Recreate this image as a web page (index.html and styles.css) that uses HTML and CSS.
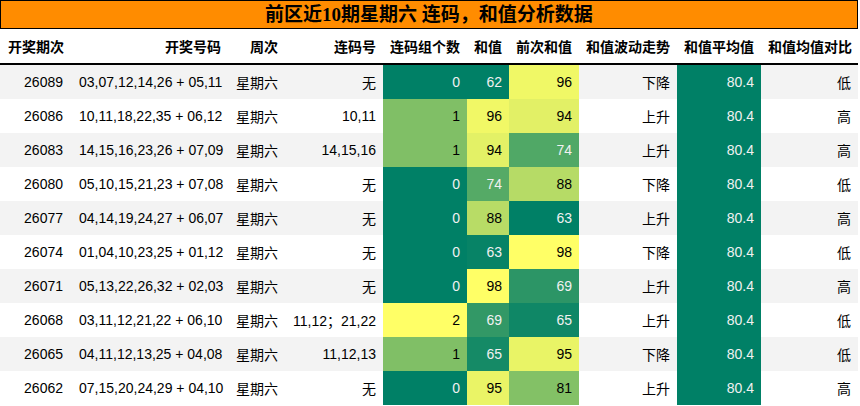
FILE: index.html
```html
<!DOCTYPE html>
<html lang="zh">
<head>
<meta charset="utf-8">
<link rel="stylesheet" href="styles.css">
</head>
<body>
<div class="title">前区近10期星期六 连码，和值分析数据</div>
<table class="grid">
  <colgroup>
    <col class="c1"><col class="c2"><col class="c3"><col class="c4"><col class="c5">
    <col class="c6"><col class="c7"><col class="c8"><col class="c9"><col class="c10">
  </colgroup>
  <thead>
    <tr>
      <th class="left">开奖期次</th><th>开奖号码</th><th>周次</th><th>连码号</th><th>连码组个数</th>
      <th>和值</th><th>前次和值</th><th>和值波动走势</th><th>和值平均值</th><th>和值均值对比</th>
    </tr>
  </thead>
  <tbody>
    <tr class="odd">
      <td>26089</td><td>03,07,12,14,26 + 05,11</td><td>星期六</td><td>无</td>
      <td class="lt" style="background:#008066">0</td>
      <td class="lt" style="background:#008066">62</td>
      <td style="background:#f0f866">96</td>
      <td>下降</td><td class="lt avg">80.4</td><td>低</td>
    </tr>
    <tr>
      <td>26086</td><td>10,11,18,22,35 + 06,12</td><td>星期六</td><td>10,11</td>
      <td style="background:#80bf66">1</td>
      <td style="background:#f1f866">96</td>
      <td style="background:#e2f066">94</td>
      <td>上升</td><td class="lt avg">80.4</td><td>高</td>
    </tr>
    <tr class="odd">
      <td>26083</td><td>14,15,16,23,26 + 07,09</td><td>星期六</td><td>14,15,16</td>
      <td style="background:#80bf66">1</td>
      <td style="background:#e3f166">94</td>
      <td class="lt" style="background:#50a866">74</td>
      <td>上升</td><td class="lt avg">80.4</td><td>高</td>
    </tr>
    <tr>
      <td>26080</td><td>05,10,15,21,23 + 07,08</td><td>星期六</td><td>无</td>
      <td class="lt" style="background:#008066">0</td>
      <td class="lt" style="background:#55aa66">74</td>
      <td style="background:#b6db66">88</td>
      <td>下降</td><td class="lt avg">80.4</td><td>低</td>
    </tr>
    <tr class="odd">
      <td>26077</td><td>04,14,19,24,27 + 06,07</td><td>星期六</td><td>无</td>
      <td class="lt" style="background:#008066">0</td>
      <td style="background:#b8dc66">88</td>
      <td class="lt" style="background:#008066">63</td>
      <td>上升</td><td class="lt avg">80.4</td><td>高</td>
    </tr>
    <tr>
      <td>26074</td><td>01,04,10,23,25 + 01,12</td><td>星期六</td><td>无</td>
      <td class="lt" style="background:#008066">0</td>
      <td class="lt" style="background:#078366">63</td>
      <td style="background:#ffff66">98</td>
      <td>下降</td><td class="lt avg">80.4</td><td>低</td>
    </tr>
    <tr class="odd">
      <td>26071</td><td>05,13,22,26,32 + 02,03</td><td>星期六</td><td>无</td>
      <td class="lt" style="background:#008066">0</td>
      <td style="background:#ffff66">98</td>
      <td class="lt" style="background:#2c9566">69</td>
      <td>上升</td><td class="lt avg">80.4</td><td>高</td>
    </tr>
    <tr>
      <td>26068</td><td>03,11,12,21,22 + 06,10</td><td>星期六</td><td>11,12；21,22</td>
      <td style="background:#ffff66">2</td>
      <td class="lt" style="background:#329866">69</td>
      <td class="lt" style="background:#0f8766">65</td>
      <td>上升</td><td class="lt avg">80.4</td><td>低</td>
    </tr>
    <tr class="odd">
      <td>26065</td><td>04,11,12,13,25 + 04,08</td><td>星期六</td><td>11,12,13</td>
      <td style="background:#80bf66">1</td>
      <td class="lt" style="background:#158a66">65</td>
      <td style="background:#e9f466">95</td>
      <td>下降</td><td class="lt avg">80.4</td><td>低</td>
    </tr>
    <tr>
      <td>26062</td><td>07,15,20,24,29 + 04,10</td><td>星期六</td><td>无</td>
      <td class="lt" style="background:#008066">0</td>
      <td style="background:#eaf466">95</td>
      <td style="background:#83c166">81</td>
      <td>上升</td><td class="lt avg">80.4</td><td>高</td>
    </tr>
  </tbody>
</table>
</body>
</html>
```

FILE: styles.css
```css
html, body {
  margin: 0;
  padding: 0;
  background: #ffffff;
}

body {
  width: 858px;
}

.title {
  box-sizing: border-box;
  height: 29px;
  background: #ff8c00;
  border: 1px solid #000000;
  color: #000000;
  font-family: "Liberation Serif", "Noto Sans CJK SC", serif;
  font-weight: bold;
  font-size: 19px;
  line-height: 27px;
  text-align: center;
}

.grid {
  width: 858px;
  border-collapse: collapse;
  table-layout: fixed;
  font-family: "Liberation Sans", "Noto Sans CJK SC", sans-serif;
  font-size: 14px;
  color: #000000;
}

.c1 { width: 72px; }
.c2 { width: 156px; }
.c3 { width: 57px; }
.c4 { width: 98px; }
.c5 { width: 84px; }
.c6 { width: 42px; }
.c7 { width: 70px; }
.c8 { width: 98px; }
.c9 { width: 84px; }
.c10 { width: 97px; }

.grid th {
  height: 34px;
  padding: 0 7px;
  font-family: "Noto Sans CJK SC", sans-serif;
  font-weight: bold;
  font-size: 14px;
  text-align: right;
  white-space: nowrap;
  border-bottom: 2px solid #000000;
  background: #ffffff;
}

.grid th.left {
  text-align: left;
  padding-left: 8px;
}

.grid td {
  height: 34px;
  padding: 0 7px;
  text-align: right;
  white-space: nowrap;
  background: #ffffff;
}

.grid td:first-child {
  padding-right: 9px;
}

.grid tr.odd td {
  background: #f3f3f3;
}

.grid td.lt {
  color: #f1f1f1;
}

.grid td.avg,
.grid tr.odd td.avg {
  background: #008066;
}
```
